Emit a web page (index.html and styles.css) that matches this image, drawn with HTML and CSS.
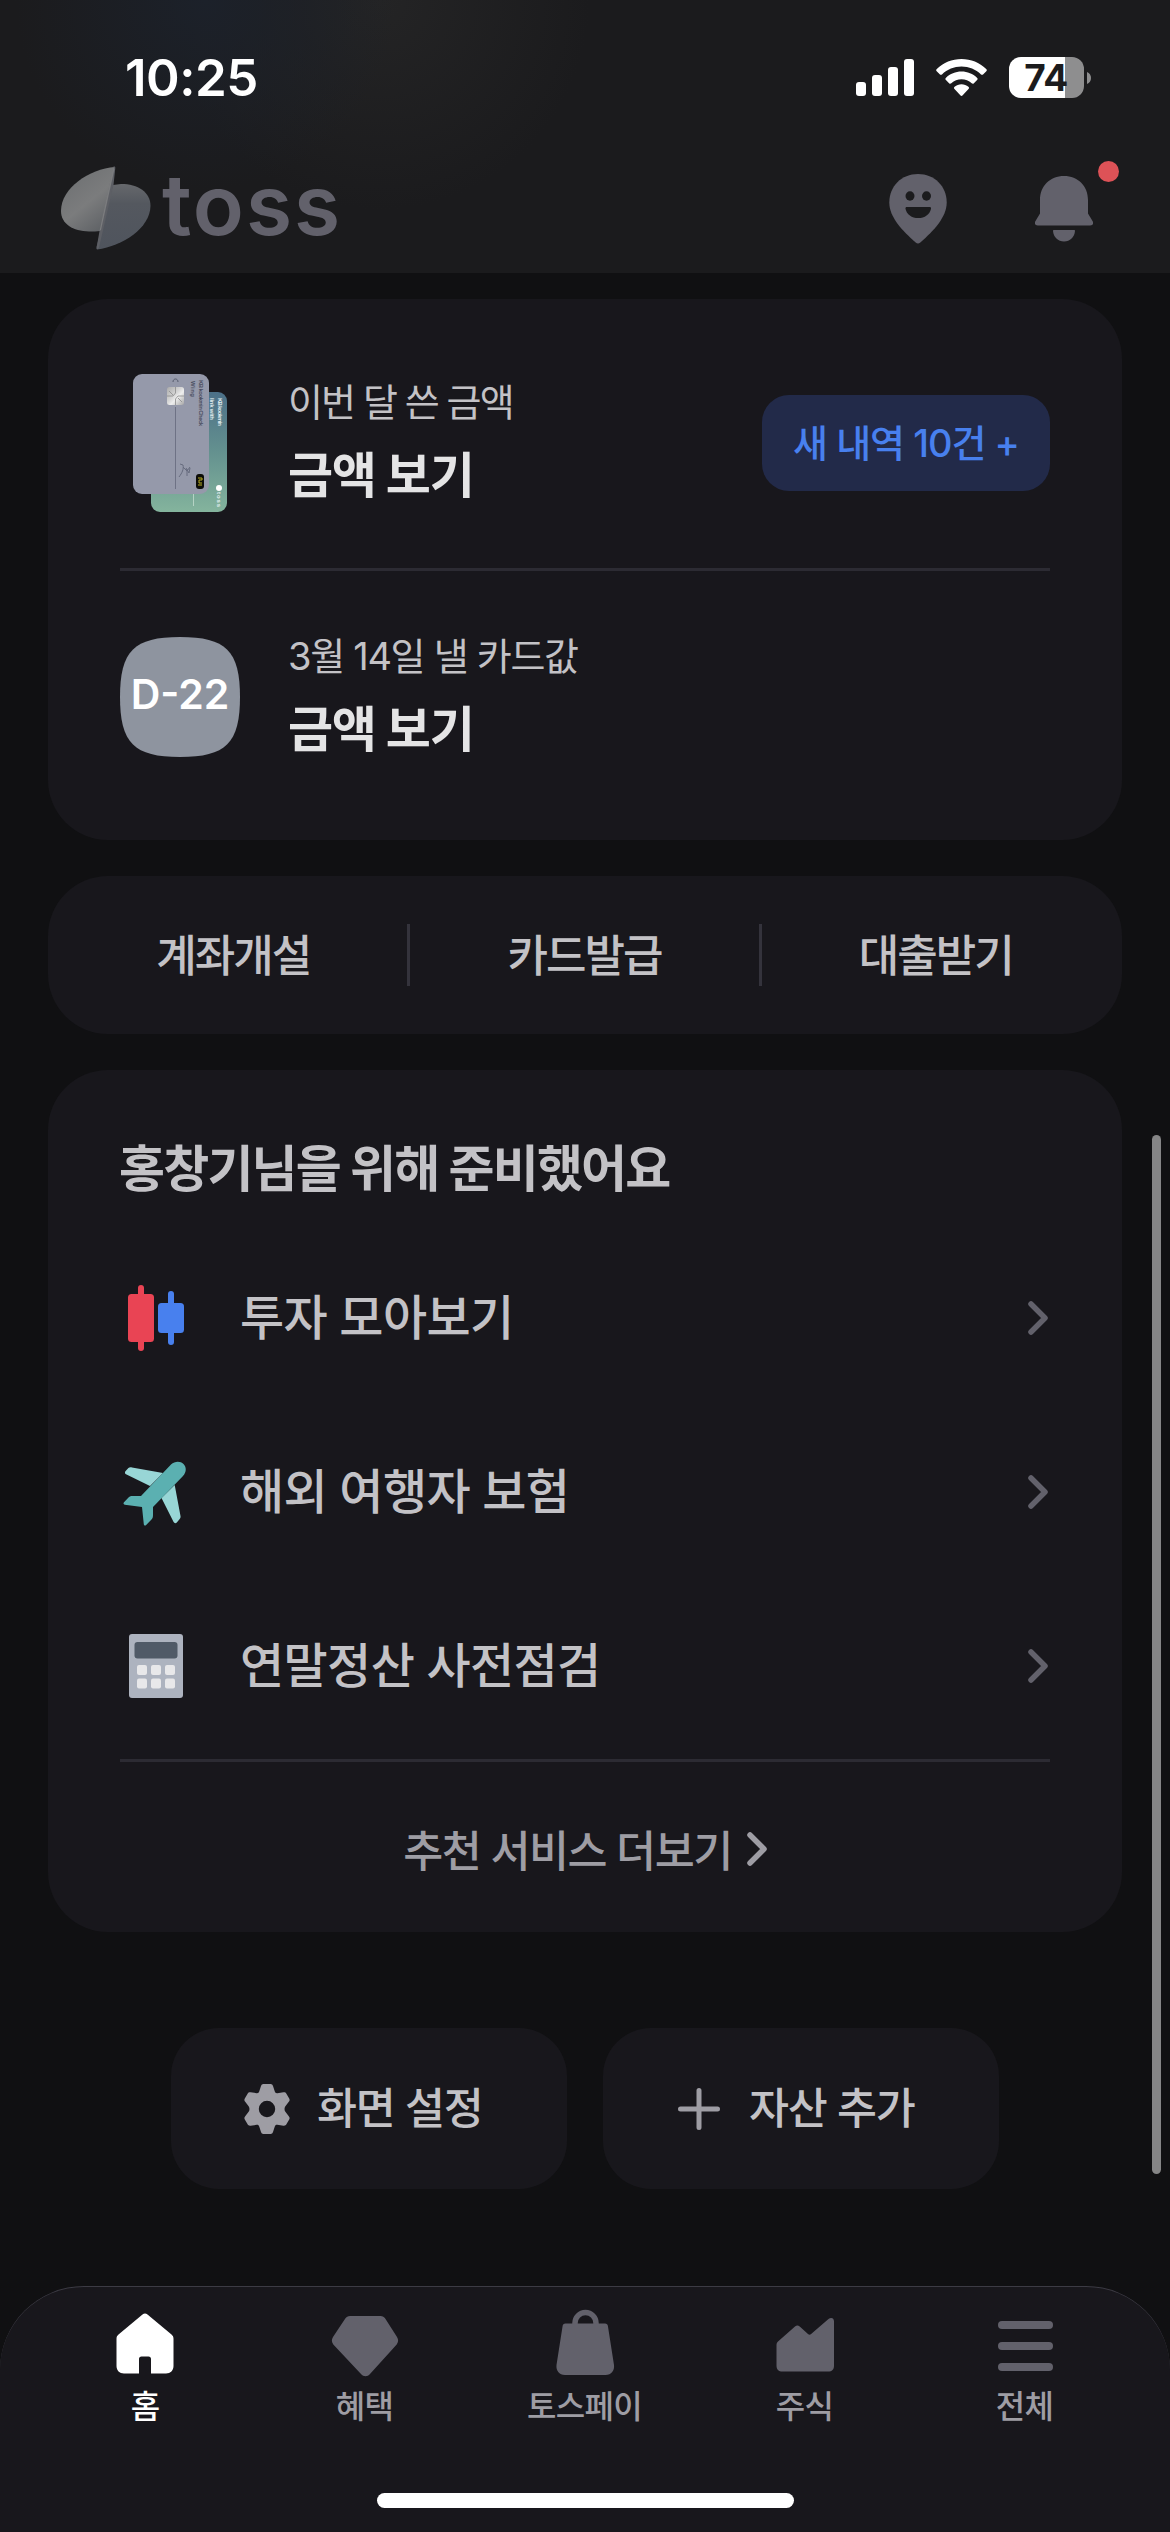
FILE: index.html
```html
<!DOCTYPE html>
<html lang="ko">
<head>
<meta charset="utf-8">
<title>toss</title>
<link rel="stylesheet" href="styles.css">
</head>
<body>
<div class="app">
  <header class="header">
    <div class="status">
      <span class="time">10:25</span>
      <div class="status-icons">
        <svg class="signal" width="58" height="37" viewBox="0 0 58 37" fill="#fff"><rect y="23" width="10" height="14" rx="3"/><rect x="16" y="16" width="10" height="21" rx="3"/><rect x="32" y="8" width="10" height="29" rx="3"/><rect x="48" width="10" height="37" rx="3"/></svg>
        <svg class="wifi" width="51" height="37" viewBox="0 0 51 37" fill="#fff"><path d="M25.500 0C35 0 43.500 3.700 50.200 9.900c.8.800.8 1.600.1 2.300l-3 3.100c-.7.700-1.600.7-2.300.1C39.700 10.400 33 7.600 25.500 7.600S11.300 10.400 6 15.400c-.7.600-1.600.6-2.300-.1l-3-3.100c-.7-.7-.7-1.500.1-2.300C7.500 3.700 16 0 25.500 0z"/><path d="M25.500 12.600c6 0 11.400 2.300 15.500 6.100.8.800.8 1.600.1 2.300l-3.200 3.200c-.6.700-1.500.7-2.200.1a15 15 0 0 0-20.400 0c-.7.600-1.600.6-2.200-.1L9.900 21c-.7-.7-.7-1.500.1-2.300 4.100-3.800 9.500-6.100 15.500-6.100z"/><path d="M25.500 25.300c2.600 0 5 .9 6.900 2.500.8.700.8 1.600.1 2.300l-5.800 6.100c-.8.900-1.600.9-2.400 0l-5.800-6.100c-.7-.7-.7-1.600.1-2.300 1.900-1.600 4.300-2.500 6.900-2.500z"/></svg>
        <div class="battery"><div class="battery-body"><span>74</span></div><svg width="4" height="12" viewBox="0 0 4 12"><path d="M0 0c2.500 1 4 3.300 4 6s-1.500 5-4 6z" fill="#8e8e8f"/></svg></div>
      </div>
    </div>
    <div class="brand-row">
      <div class="brand">
        <svg width="90" height="84" viewBox="0 0 90 84">
          <defs>
            <linearGradient id="leafA" x1="0.2" y1="0.1" x2="0.8" y2="1"><stop offset="0" stop-color="#6f7173"/><stop offset=".5" stop-color="#7b7c7d"/><stop offset="1" stop-color="#5d6064"/></linearGradient>
            <linearGradient id="leafB" x1="0.5" y1="0" x2="0.5" y2="1"><stop offset="0" stop-color="#66686c"/><stop offset=".3" stop-color="#54585f"/><stop offset="1" stop-color="#4f545d"/></linearGradient>
          </defs>
          <path d="M36 83.500C62 80 89 62 89.500 40 89.500 26 77 18 60 18l-8 1L35.500 81z" fill="url(#leafB)"/>
          <path d="M54 1C28 3 0 22 0 45c0 13 12 20 28 20.500 4 0 8 0 11-.6L52.500 10z" fill="url(#leafA)"/>
          <path d="M52.500 .5c1.300-.3 1.900.2 1.800 1.500L52.500 19 38 81.500c-.3 1.300-2.500 2.600-2.500 1L38.500 65 51 8z" fill="#5d5f65"/>
          <path d="M52 1 38.500 65l1.500-1L53.500 3z" fill="#7b7c7e"/>
        </svg>
        <span class="wordmark">toss</span>
      </div>
      <div class="header-actions">
        <svg width="58" height="70" viewBox="0 0 58 70"><path fill="#62616b" d="M29 0c16.500 0 28.700 12.300 28.700 28.500C57.700 43 45 56.500 31.300 68.500c-1.500 1.300-3.100 1.300-4.600 0C13 56.500.3 43 .3 28.500.3 12.300 12.500 0 29 0z"/><ellipse cx="21" cy="22" rx="4.500" ry="4.700" fill="#1b1b1d"/><ellipse cx="37.500" cy="22" rx="4.500" ry="4.700" fill="#1b1b1d"/><path fill="#1b1b1d" d="M18 33h22.500c1.200 0 1.700.6 1.500 1.700C40.800 40.500 35.700 44 29.200 44s-11.500-3.500-12.700-9.300C16.300 33.600 16.800 33 18 33z"/></svg>
        <div class="bell">
          <svg width="58" height="66" viewBox="0 0 58 66" fill="#62616b"><path d="M29 0c14 0 24 10 24 24v13.500l4.500 7.500c1.400 2.400.3 4.500-2.300 4.500H2.800C.2 49.500-.9 47.400.5 45L5 37.500V24C5 10 15 0 29 0z"/><path d="M19 54h20c.6 0 1 .4 1 1-.5 6-5 10.500-11 10.500S18.500 61 18 55c0-.6.400-1 1-1z"/></svg>
          <i class="dot"></i>
        </div>
      </div>
    </div>
  </header>

  <main class="content">
    <section class="card spend">
      <div class="spend-row">
        <div class="thumb">
          <svg class="cards" width="96" height="140" viewBox="0 0 96 140">
            <defs>
              <linearGradient id="green" x1="0" y1="0" x2="0" y2="1"><stop offset="0" stop-color="#4c7088"/><stop offset=".5" stop-color="#64918f"/><stop offset="1" stop-color="#84b49d"/></linearGradient>
              <linearGradient id="chip" x1="0" y1="0" x2="1" y2="1"><stop offset="0" stop-color="#aaa"/><stop offset=".45" stop-color="#d8d8d8"/><stop offset=".6" stop-color="#eee"/><stop offset="1" stop-color="#a5a5a5"/></linearGradient>
            </defs>
            <rect x="19" y="19" width="76" height="120" rx="9" fill="url(#green)"/>
            <path d="M61.500 119v14" stroke="#b5d3c4" stroke-width="1"/>
            <g class="micro" fill="#e4eef0"><text transform="translate(86 25) rotate(90)" textLength="28">KB kookmin</text><text transform="translate(78 25) rotate(90)" textLength="22">link with</text><text transform="translate(85 119) rotate(90)" textLength="15">toss</text></g>
            <ellipse cx="87" cy="115" rx="3" ry="3" fill="#fff"/>
            <rect x="1" y="1" width="76" height="120" rx="9" fill="#9599aa"/>
            <path d="M43.500 34v82" stroke="#6e7285"/>
            <rect x="35" y="14" width="17" height="18" rx="2.500" fill="url(#chip)"/>
            <path d="M35 23h6l2.500-3v-6M52 23h-6l-2.500 3v6M37 18l4 4M50 29l-4-4" stroke="#8b8b8b" stroke-width=".8" fill="none"/>
            <path d="M41 9c0-4 5-4 5 0" stroke="#555a6c" fill="none"/>
            <path d="M47 104c3-4 5-8 4-12l-3-1M51 94l4 4 3-4M54 95l3 5 1-5M55 96v7" stroke="#666b7e" fill="none"/>
            <g class="micro" fill="#4a4e60"><text transform="translate(67 7) rotate(90)" textLength="46">KB kookmin Check</text><text transform="translate(59 8) rotate(90)" textLength="16">Wing</text></g>
            <rect x="64" y="101" width="8" height="15" rx="3" fill="#0c0c08"/><path d="M66 105h4v2h-3v3h3m-4 2h4" stroke="#b9ad22" fill="none"/>
          </svg>
        </div>
        <div class="spend-text"><p class="sub">이번 달 쓴 금액</p><p class="strong">금액 보기</p></div>
        <button class="new-btn">새 내역 10건 +</button>
      </div>
      <hr>
      <div class="spend-row due">
        <div class="thumb"><svg width="120" height="120" viewBox="0 0 120 120"><path fill="#8e949f" d="M60 0c46 0 60 14 60 60s-14 60-60 60S0 106 0 60 14 0 60 0z"/></svg><span class="dday">D-22</span></div>
        <div class="spend-text"><p class="sub bill">3월 14일 낼 카드값</p><p class="strong">금액 보기</p></div>
      </div>
    </section>

    <nav class="card quick">
      <a>계좌개설</a><a>카드발급</a><a>대출받기</a>
    </nav>

    <section class="card picks">
      <h2>홍창기님을 위해 준비했어요</h2>
      <a class="pick">
        <svg width="72" height="72" viewBox="0 0 72 72"><g fill="#e94454"><rect x="18" y="3" width="6" height="66" rx="3"/><rect x="8" y="12" width="26" height="48" rx="3.500"/></g><g fill="#4880ee"><rect x="48" y="9" width="6" height="54" rx="3"/><rect x="38" y="21" width="26" height="30" rx="3.500"/></g></svg>
        <span class="label">투자 모아보기</span>
        <svg class="chev" width="20" height="34" viewBox="0 0 20 34"><path d="M3 3l14 14L3 31"/></svg>
      </a>
      <a class="pick">
        <svg width="72" height="72" viewBox="0 0 72 72"><g fill="#98d6d6"><path d="M12 11.500 43 17 30 30 6 18.300C4.800 17.500 4.700 16.300 5.400 15.200l3-3.200c.8-.7 2.300-.8 3.600-.5z"/><path d="M54.700 29 60.500 60c.2 1.300 0 2-.8 3l-2.900 3.500c-1 1-2.600.8-3.200-.4L41.500 42z"/></g><path fill="#5bb0b1" d="M51 8.500c4-3.700 9.500-3.500 12.500-.5s3.200 8-.5 12L33 51v8c0 2-.2 3-1.500 4.500l-5.300 5.500c-1 1-2.200.6-2.400-.8L22 51 4.800 48.700c-1.400-.2-1.700-1.400-.8-2.400l4.500-4.800C9.800 40.200 11 40 12.500 40H21z"/></svg>
        <span class="label">해외 여행자 보험</span>
        <svg class="chev" width="20" height="34" viewBox="0 0 20 34"><path d="M3 3l14 14L3 31"/></svg>
      </a>
      <a class="pick">
        <svg width="72" height="72" viewBox="0 0 72 72"><rect x="9" y="4" width="54" height="64" rx="3" fill="#adb3bf"/><rect x="14.500" y="12" width="43" height="16.500" rx="3" fill="#505a67"/><g fill="#e8e8ea"><rect x="17" y="35" width="10" height="10" rx="2"/><rect x="31" y="35" width="10" height="10" rx="2"/><rect x="45" y="35" width="10" height="10" rx="2"/><rect x="17" y="48.500" width="10" height="10" rx="2"/><rect x="31" y="48.500" width="10" height="10" rx="2"/><rect x="45" y="48.500" width="10" height="10" rx="2"/></g></svg>
        <span class="label">연말정산 사전점검</span>
        <svg class="chev" width="20" height="34" viewBox="0 0 20 34"><path d="M3 3l14 14L3 31"/></svg>
      </a>
      <hr>
      <a class="more"><span>추천 서비스 더보기</span><svg class="chev" width="20" height="34" viewBox="0 0 20 34"><path d="M3 3l14 14L3 31"/></svg></a>
    </section>

    <div class="actions">
      <button class="action">
        <svg class="gear" width="50" height="50" viewBox="0 0 50 50"><path fill="#9e9da4" fill-rule="evenodd" d="M21.500 0h7c1.400 0 2.100.7 2.500 2l1.800 5.500c.4 1.300 1.300 1.900 2.600 1.700l6-.9c1.400-.2 2.300.2 3 1.400l2.800 4.800c.7 1.200.5 2.200-.4 3.300l-3.600 4.600c-.9 1.200-.9 4 0 5.200l3.600 4.600c.9 1.100 1.100 2.100.4 3.300l-2.800 4.800c-.7 1.200-1.600 1.600-3 1.400l-6-.9c-1.300-.2-2.200.4-2.600 1.700L31 48c-.4 1.300-1.100 2-2.500 2h-7c-1.400 0-2.100-.7-2.500-2l-1.800-5.500c-.4-1.300-1.300-1.900-2.600-1.700l-6 .9c-1.400.2-2.300-.2-3-1.400l-2.800-4.800c-.7-1.200-.5-2.200.4-3.300l3.600-4.600c.9-1.200.9-4 0-5.200l-3.600-4.600c-.9-1.100-1.100-2.100-.4-3.300l2.800-4.800c.7-1.200 1.600-1.600 3-1.400l6 .9c1.300.2 2.200-.4 2.600-1.700L19 2c.4-1.300 1.100-2 2.500-2zM25 16.800a8.200 8.200 0 1 0 0 16.400 8.200 8.200 0 0 0 0-16.400z"/></svg>
        <span>화면 설정</span>
      </button>
      <button class="action">
        <svg class="plus" width="42" height="42" viewBox="0 0 42 42"><path d="M21 2.500v37M2.500 21h37" stroke="#9e9da4" stroke-width="5" stroke-linecap="round"/></svg>
        <span>자산 추가</span>
      </button>
    </div>
  </main>

  <nav class="tabs">
    <a class="tab on"><svg width="72" height="72" viewBox="0 0 72 72"><path fill="#fff" d="M33.500 8.500c1.600-1.400 3.400-1.400 5 0L62.500 28.500c1.300 1.100 2 2.500 2 4.200V60c0 4.500-3 7.500-7.500 7.500H42V53c0-1.500-.9-2.500-2.500-2.500h-7c-1.600 0-2.500 1-2.500 2.500v14.500H15c-4.500 0-7.500-3-7.500-7.500V32.700c0-1.700.7-3.100 2-4.200z"/></svg><span>홈</span></a>
    <a class="tab"><svg width="72" height="72" viewBox="0 0 72 72"><path fill="#62616b" d="M21 10h30.500c2.200 0 3.600.9 4.700 2.600L68 31c1.600 2.600 1.500 5-.3 7.400L41 68c-2.500 2.900-6.500 2.900-9 0L4.300 38.400C2.500 36 2.400 33.600 4 31l12.300-18.400C17.400 10.900 18.800 10 21 10z"/></svg><span>혜택</span></a>
    <a class="tab"><svg width="72" height="72" viewBox="0 0 72 72"><path fill="none" stroke="#62616b" stroke-width="5.500" d="M26 19v-2a10.500 10.500 0 0 1 21 0v2"/><path fill="#62616b" d="M16.500 17.500h39.500c1.800 0 2.700.9 2.900 2.600L65 59c.6 5.500-2.500 10-8.500 10H16c-6 0-9.100-4.500-8.500-10l6.100-38.900c.2-1.700 1.100-2.600 2.900-2.600z"/></svg><span>토스페이</span></a>
    <a class="tab"><svg width="72" height="72" viewBox="0 0 72 72"><path fill="#62616b" d="M9 35.500 26 20.500c1.600-1.400 3.200-1.400 4.700 0L39 28c1 .9 2.100.9 3.100 0L59.500 13c2.500-2 5.500-1 5.500 2.300V59.500c0 4-2 6-6 6H13.500c-4 0-6-2-6-6V39c0-1.400.5-2.500 1.500-3.500z"/></svg><span>주식</span></a>
    <a class="tab"><svg width="72" height="72" viewBox="0 0 72 72" fill="#62616b"><rect x="9" y="15" width="55" height="8" rx="4"/><rect x="9" y="36" width="55" height="8" rx="4"/><rect x="9" y="57" width="55" height="8" rx="4"/></svg><span>전체</span></a>
    <i class="home-indicator"></i>
  </nav>
  <i class="scrollbar"></i>
</div>
</body>
</html>
```
FILE: styles.css
```css
* { box-sizing: border-box; margin: 0; padding: 0; }
body { background: #101012; width: 1170px; height: 2532px; overflow: hidden; font-family: Inter, "Noto Sans CJK KR", sans-serif; color: #c3c2c6; white-space: nowrap; }
svg { display: block; flex: none; }
button { border: 0; font: inherit; color: inherit; }
.app { position: relative; width: 1170px; height: 2532px; display: flex; flex-direction: column; }

/* Status bar and brand */
.header { height: 273px; display: flex; flex-direction: column; background: radial-gradient(circle 190px at 205px 0, #1c212a, rgba(28, 31, 36, 0) 100%), radial-gradient(circle 210px at 380px 0, #242425, rgba(36, 36, 37, 0) 100%), #1b1b1d; }
.status { height: 142px; display: flex; justify-content: space-between; align-items: flex-start; padding: 57px 79px 0 125px; }
.time { font-size: 51px; font-weight: 600; line-height: 42px; color: #fff; letter-spacing: -0.5px; }
.status-icons { display: flex; align-items: flex-start; }
.signal, .wifi { margin-top: 2px; }
.wifi { margin-left: 22px; }
.battery { display: flex; align-items: center; gap: 3px; margin-left: 22px; }
.battery-body { width: 75px; height: 41px; border-radius: 12px; background: linear-gradient(90deg, #fff 56px, #8e8e8f 56px); display: flex; align-items: center; justify-content: center; padding-right: 1px; color: #1b1b1d; font-size: 37px; font-weight: 700; letter-spacing: -0.5px; }
.brand-row { height: 131px; display: flex; justify-content: space-between; align-items: flex-start; padding: 24px 77px 0 61px; }
.brand { display: flex; align-items: flex-start; }
.wordmark { margin-left: 11px; font-size: 84px; font-weight: 600; line-height: 78px; color: #62616b; letter-spacing: 2px; }
.header-actions { display: flex; gap: 88px; align-items: center; padding-top: 8px; }
.bell { position: relative; }
.dot { position: absolute; left: 63px; top: -15px; width: 21px; height: 21px; border-radius: 50%; background: #dd5257; }

.content { display: flex; flex-direction: column; align-items: center; gap: 36px; padding-top: 26px; height: 2013px; }
.card { width: 1074px; background: #18171c; border-radius: 60px; }
hr { border: 0; height: 3px; background: #2c2b33; margin: 0 72px; }

/* Spending card */
.spend { height: 541px; padding-top: 19px; }
.spend-row { height: 250px; display: flex; align-items: center; padding: 0 72px; }
.due { height: 252px; }
.thumb { width: 120px; height: 140px; display: flex; align-items: center; justify-content: center; position: relative; }
.dday { position: absolute; color: #fff; font-size: 41px; font-weight: 600; padding-bottom: 6px; }
.micro { font-family: "Liberation Sans", sans-serif; font-size: 6px; font-weight: 700; }
.spend-text { flex: 1; margin-left: 48px; padding-bottom: 9px; }
.spend-text p { height: 73px; line-height: 73px; }
.sub { font-size: 38px; letter-spacing: -1.9px; color: #c3c2c6; }
.bill { letter-spacing: -1.3px; }
.strong { font-size: 49px; font-weight: 700; color: #e4e4e5; letter-spacing: -1.3px; }
.new-btn { width: 288px; height: 96px; padding-bottom: 5px; border-radius: 27px; background: #222a49; color: #4880ee; font-size: 38px; font-weight: 500; letter-spacing: -1px; }

.quick { height: 158px; display: flex; align-items: center; padding: 0 12px 0 9px; }
.quick a { flex: 1; height: 62px; padding-left: 2px; line-height: 65px; text-align: center; font-size: 44px; font-weight: 500; letter-spacing: -2px; }
.quick a + a { padding: 0; border-left: 3px solid #34333c; }

/* Recommendations */
.picks { height: 862px; }
.picks h2 { height: 161px; padding: 37px 71px 0; line-height: 125px; font-size: 50px; font-weight: 700; letter-spacing: -1.8px; }
.pick { height: 174px; display: flex; align-items: center; padding: 0 74px 0 72px; font-size: 48px; font-weight: 500; letter-spacing: -0.6px; }
.label { flex: 1; margin-left: 48px; padding-bottom: 8px; }
.chev { fill: none; stroke: #62616b; stroke-width: 5.5; stroke-linecap: round; stroke-linejoin: round; }
.picks hr { margin-top: 6px; }
.more { height: 173px; display: flex; align-items: center; justify-content: center; gap: 15px; font-size: 43.5px; font-weight: 500; letter-spacing: -1.5px; color: #9e9da4; }
.more .chev { stroke: #9e9da4; }

.actions { display: flex; gap: 36px; margin-top: 60px; }
.action { width: 396px; height: 161px; border-radius: 48px; background: #18171c; display: flex; align-items: center; padding-left: 71px; font-size: 43.5px; font-weight: 500; letter-spacing: -1.2px; }
.action span { margin-left: 25px; padding-bottom: 6px; }
.plus { margin: 0 4px; }

/* Tab bar */
.tabs { position: relative; height: 246px; display: flex; align-items: flex-start; padding: 19px 35px 0; background: #18171c; border-top: 1px solid #3c3b44; border-radius: 84px 84px 0 0; }
.tab { flex: 1; display: flex; flex-direction: column; align-items: center; font-size: 32px; font-weight: 500; letter-spacing: -0.7px; color: #9e9da4; }
.tab span { line-height: 58px; margin-right: 1px; }
.tab.on { color: #fff; }
.on span { margin-right: 0; }
.home-indicator { position: absolute; left: 377px; top: 206px; width: 417px; height: 15px; border-radius: 8px; background: #fff; }
.scrollbar { position: absolute; left: 1152px; top: 1135px; width: 9px; height: 1039px; border-radius: 5px; background: #858586; }
```
